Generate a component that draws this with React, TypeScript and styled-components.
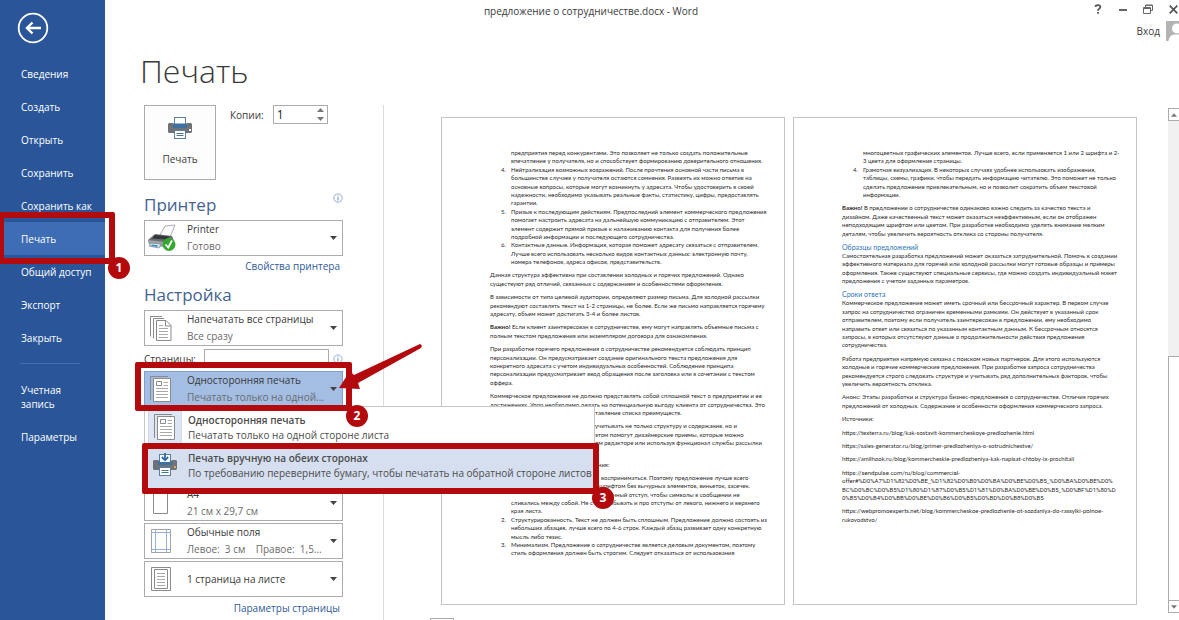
import React from 'react';
import styled, { createGlobalStyle, css } from 'styled-components';

const UI_FONT = '"Open Sans", "Noto Sans", sans-serif';
const RED = '#b30a0e';
const BLUE = '#2a5699';

const GlobalStyle = createGlobalStyle`
  *, *::before, *::after { box-sizing: border-box; }
  html, body { margin: 0; padding: 0; background: #fff; }
  body { font-family: ${UI_FONT}; font-size: 10px; color: #3a3a3a; }
  button, input { font: inherit; color: inherit; border-radius: 0; }
`;

/* ---------- shell ---------- */

const Shell = styled.div`
  display: grid;
  grid-template-columns: 105px minmax(0, 1fr);
  grid-template-rows: 44px minmax(0, 1fr);
  height: 100vh;
  overflow: hidden;
`;

const TitleBar = styled.header`
  grid-column: 1 / -1;
  grid-row: 1;
  display: grid;
  grid-template-columns: 1fr auto 1fr;
  align-items: start;
`;

const DocTitle = styled.div`
  grid-column: 2;
  padding: 3px 0 0 3px;
  line-height: 16px;
`;

const TitleRight = styled.div`
  display: flex;
  flex-direction: column;
  align-items: flex-end;
`;

const WindowButtons = styled.div`
  display: flex;
  padding-top: 2px;
`;

const WindowButton = styled.button`
  display: grid;
  place-items: center;
  width: 25px;
  height: 14px;
  padding: 0;
  border: 0;
  background: none;
  color: #666;
  &:last-child { width: 12px; margin-left: 7px; }
`;

const SignIn = styled.button`
  display: flex;
  align-items: center;
  gap: 6px;
  margin-top: 5px;
  padding: 0;
  border: 0;
  background: none;
  line-height: 16px;
`;

/* ---------- sidebar ---------- */

const Sidebar = styled.nav`
  grid-column: 1;
  grid-row: 1 / -1;
  z-index: 1;
  display: flex;
  flex-direction: column;
  background: ${BLUE};
  color: #fff;
`;

const BackButton = styled.button`
  width: 32px;
  height: 32px;
  margin: 12px 0 13px 17px;
  padding: 0;
  border: 0;
  background: none;
`;

const NavItem = styled.div<{ $active?: boolean }>`
  position: relative;
  display: flex;
  align-items: center;
  min-height: 33px;
  background: ${(p) => (p.$active ? '#3e6db5' : 'transparent')};
`;

const NavLink = styled.a`
  padding-left: 21px;
  color: #fff;
  line-height: 14px;
  text-decoration: none;
  white-space: nowrap;
`;

const NavSeparator = styled.hr`
  width: 60px;
  height: 1px;
  margin: 9px 0 16px 20px;
  border: 0;
  background: #4470ae;
`;

const AccountItem = styled(NavItem)`
  margin-bottom: 7px;
`;

/* ---------- annotations ---------- */

const Frame = styled.div<{ $inset: string }>`
  position: absolute;
  inset: ${(p) => p.$inset};
  z-index: 3;
  border: 6px solid ${RED};
  border-radius: 2px;
  pointer-events: none;
`;

const Badge = styled.span<{ $right: number; $bottom: number }>`
  position: absolute;
  right: ${(p) => p.$right}px;
  bottom: ${(p) => p.$bottom}px;
  display: grid;
  place-items: center;
  width: 22px;
  height: 22px;
  border-radius: 50%;
  background: ${RED};
  color: #fff;
  font-size: 12px;
  font-weight: 700;
  line-height: 16px;
`;

const ArrowSvg = styled.svg`
  position: absolute;
  left: 194px;
  top: -30px;
  z-index: 4;
  pointer-events: none;
`;

/* ---------- main ---------- */

const Main = styled.main`
  grid-column: 2;
  grid-row: 2;
  display: flex;
  flex-direction: column;
  min-height: 0;
`;

const PageTitle = styled.h1`
  margin: 0;
  padding: 7px 0 14px 35px;
  font-size: 32px;
  line-height: 40px;
  font-weight: 300;
`;

const Body = styled.div`
  display: flex;
  flex: 1;
  min-height: 0;
`;

const Settings = styled.section`
  flex: none;
  width: 279px;
  padding: 0 40px 0 39px;
  border-right: 1px solid #dcdcdc;
`;

const PrintRow = styled.div`
  display: flex;
  align-items: flex-start;
`;

const PrintButton = styled.button`
  display: flex;
  flex-direction: column;
  align-items: center;
  gap: 11px;
  width: 72px;
  height: 75px;
  padding: 10px 0 0;
  border: 1px solid #ababab;
  background: #fdfdfd;
  line-height: 16px;
`;

const CopiesLabel = styled.label`
  margin: 2px 9px 0 14px;
  line-height: 16px;
`;

const Spinner = styled.div`
  display: flex;
  align-items: center;
  width: 55px;
  height: 19px;
  padding-right: 3px;
  border: 1px solid #ababab;
`;

const SpinnerInput = styled.input`
  flex: 1;
  min-width: 0;
  padding: 0 0 0 3px;
  border: 0;
  outline: 0;
  background: none;
  color: #222;
  font-size: 12px;
  line-height: 16px;
  appearance: textfield;
  &::-webkit-inner-spin-button { appearance: none; margin: 0; }
`;

const SectionHead = styled.div<{ $top: number }>`
  display: flex;
  justify-content: space-between;
  height: 24px;
  margin: ${(p) => p.$top}px 0 3px;
`;

const SectionTitle = styled.h2`
  margin: 0;
  color: #44628f;
  font-size: 17px;
  line-height: 24px;
  font-weight: 400;
`;

const Stack = styled.div`
  display: flex;
  flex-direction: column;
  gap: 2px;
`;

const DropWrap = styled.div<{ $gapBelow?: number }>`
  position: relative;
  margin-bottom: ${(p) => p.$gapBelow ?? 0}px;
`;

const DropButton = styled.button<{ $open?: boolean }>`
  display: flex;
  align-items: center;
  width: 100%;
  height: 36px;
  padding: 0 5px 0 0;
  border: 1px solid ${(p) => (p.$open ? '#7f9fd2' : '#ababab')};
  background: ${(p) => (p.$open ? '#a3bde3' : '#fff')};
  text-align: left;
  > svg { flex: none; }
`;

const DropIcon = styled.span`
  display: grid;
  place-items: center;
  flex: none;
  width: 32px;
  margin-right: 10px;
`;

const DropText = styled.span`
  display: flex;
  flex-direction: column;
  flex: 1;
  min-width: 0;
  line-height: 17px;
  white-space: pre;
`;

const Muted = styled.span`
  color: #6b6b6b;
`;

const SettingsLink = styled.a<{ $top: number }>`
  display: block;
  margin: ${(p) => p.$top}px 3px 0 0;
  color: #2f5a96;
  line-height: 16px;
  text-align: right;
  text-decoration: none;
`;

const PagesRow = styled.div`
  display: flex;
  align-items: center;
  height: 21px;
`;

const PagesLabel = styled.label`
  width: 61px;
  line-height: 16px;
`;

const PagesInput = styled.input`
  width: 125px;
  height: 19px;
  margin-right: 4px;
  padding: 0 3px;
  border: 1px solid #ababab;
`;

const Menu = styled.div`
  position: absolute;
  left: 0;
  top: 35px;
  z-index: 2;
  width: 451px;
  padding: 2px 0 0 3px;
  border: 1px solid #c6c6c6;
  background: #fff;
`;

const MenuItem = styled.button<{ $hover?: boolean }>`
  display: flex;
  gap: 6px;
  width: 100%;
  height: ${(p) => (p.$hover ? 42 : 38)}px;
  padding: 0;
  border: 0;
  background: ${(p) => (p.$hover ? '#d5dff0' : '#fff')};
  text-align: left;
`;

const MenuIcon = styled.span<{ $on?: boolean }>`
  display: grid;
  place-items: center;
  flex: none;
  width: 34px;
  height: 36px;
  ${(p) => p.$on && css`background: #dfe6f3; border: 1px solid #d0dbee;`}
`;

const MenuText = styled.span`
  display: flex;
  flex-direction: column;
  padding-top: 4px;
  color: #4c4c4c;
  line-height: 15px;
  white-space: nowrap;
`;

const MenuTitle = styled.span`
  font-weight: 600;
`;

/* ---------- preview ---------- */

const Preview = styled.section`
  display: flex;
  flex-direction: column;
  flex: 1;
  min-width: 0;
  padding-top: 12px;
`;

const Sheets = styled.div`
  display: flex;
  flex: none;
  gap: 8px;
  padding: 0 31px 0 57px;
`;

const Sheet = styled.article`
  flex: 1;
  min-width: 0;
  height: 488px;
  padding: 31px 10px 0 48px;
  border: 1px solid #c4c4c4;
  overflow: hidden;
  color: #2b2b2b;
  font-family: Lato, Carlito, sans-serif;
  font-size: 6px;
  line-height: 1.4;
  white-space: nowrap;
`;

const Para = styled.p<{ $encoded?: boolean }>`
  margin: 0 0 5px;
  font-family: ${(p) => (p.$encoded ? 'Roboto, sans-serif' : 'inherit')};
`;

const List = styled.ol`
  margin: 0 0 5px;
  padding: 0 0 0 11px;
  list-style: none;
`;

const ListItem = styled.li`
  display: flex;
`;

const ItemNumber = styled.span`
  flex: none;
  width: 10px;
`;

const Line = styled.span<{ $indent?: number }>`
  display: block;
  min-height: 8px;
  padding-left: ${(p) => p.$indent ?? 0}px;
`;

const DocHeading = styled.h3`
  margin: 0;
  color: #2e74b5;
  font-size: 7px;
  line-height: 9px;
  font-weight: 400;
`;

const PageNav = styled.div`
  padding: 13px 0 0 46px;
`;

const PageNumber = styled.input`
  width: 24px;
  height: 19px;
  border: 1px solid #ababab;
`;

const ScrollTrack = styled.div`
  display: flex;
  flex-direction: column;
  flex: none;
  width: 11px;
  margin: 3px 0 7px;
  background: #f1f1f1;
`;

const ScrollButton = styled.button`
  display: grid;
  place-items: center;
  flex: none;
  height: 13px;
  padding: 0;
  border: 1px solid #ababab;
  border-right: 0;
  background: #fff;
`;

const ScrollThumb = styled.div`
  flex: 1;
  margin-top: 235px;
  border: 1px solid #ababab;
  border-right: 0;
  border-bottom: 0;
  background: #fff;
`;

/* ---------- icons ---------- */

const Caret = ({ up, size = 7, color = '#444' }: { up?: boolean; size?: number; color?: string }) => (
  <svg width={size} height="4" viewBox="0 0 7 4" aria-hidden="true">
    <path d={up ? 'M0 4 3.5 0 7 4Z' : 'M0 0H7L3.5 4Z'} fill={color} />
  </svg>
);

const InfoIcon = () => (
  <svg width="10" height="10" viewBox="0 0 10 10" aria-hidden="true">
    <circle cx="5" cy="5" r="4.2" fill="#fff" stroke="#7d9cc4" strokeWidth=".8" />
    <path d="M5 4.3V7.5M5 2.4V3.4" stroke="#5f86b8" strokeWidth="1" />
  </svg>
);

const PrinterIcon = ({ arrow }: { arrow?: boolean }) => (
  <svg width="26" height="24" viewBox="0 0 26 24" aria-hidden="true">
    <path d="M2 7H6V10H20V7H24L25 8V16L24 17H2L1 16V8Z" fill="#6f7276" />
    <rect x="7.5" y="1.5" width="11" height="9" fill="#fff" stroke="#5a7fa3" />
    <path d="M6 7.500H20V12H6Z" fill="#3f719f" />
    {arrow && (
      <>
        <path d="M8 2H18V9H8Z" fill="#fff" />
        <path d="M13 0V7M9.800 4 13 7.300 16.200 4" fill="none" stroke="#2f6ba8" strokeWidth="1.800" />
      </>
    )}
    <rect x="22" y="13" width="2" height="2" fill={arrow ? '#e4a06c' : '#fff'} />
    <rect x="7.5" y="14.5" width="11" height="8" fill="#fff" stroke="#5a7fa3" />
    <path d="M9.500 17.500H16.500M9.500 19.500H16.500" stroke="#4a7199" />
  </svg>
);

const DevicePrinterIcon = () => (
  <svg width="29" height="28" viewBox="0 0 29 28" aria-hidden="true">
    <path d="M13 11 18 2 28 1 23 13Z" fill="#fbfbfb" stroke="#9a9a9a" strokeWidth=".8" />
    <path d="M1 16 8 10 25 12 27 17 18 22 2 20Z" fill="#6a6d70" />
    <path d="M8 11 23 12.5 19 15.5 5 14.5Z" fill="#33373a" />
    <path d="M1 16 18 18V23L3 22Z" fill="#9ea3a8" />
    <path d="M4 19 14 20 12 24 2 22Z" fill="#dfe7ee" stroke="#6a7f92" strokeWidth=".7" />
    <path d="M5 20.5 11 21.3 10 23 4 22Z" fill="#3f8fc4" />
    <circle cx="22" cy="20.5" r="6.5" fill="#35a832" />
    <path d="M18.5 20.5 21.3 23.5 25 16.5" fill="none" stroke="#fff" strokeWidth="1.8" />
  </svg>
);

const PagesIcon = () => (
  <svg width="22" height="26" viewBox="0 0 22 26" fill="none" stroke="#8a8a8a" aria-hidden="true">
    <path d="M.5 21.5V1.500H12M3.500 23.500V3.500H14" />
    <path d="M6.500 5.500H16L21 10.500V25.500H6.500Z" fill="#fff" />
    <path d="M15.500 5.500V11H21" />
    <path d="M9 10.500H13M9 13.500H18M9 16.500H18M9 19.500H18M9 22.500H18" stroke="#a8a8a8" />
  </svg>
);

const OneSidedIcon = () => (
  <svg width="22" height="28" viewBox="0 0 22 28" fill="none" stroke="#8a8a8a" aria-hidden="true">
    <path d="M.5 25V1.500H18" />
    <path d="M3.500 3.500H20.500V26.500H3.500Z" fill="#fff" />
    <path d="M6.500 6.500H11.500V10.500H6.500Z" />
    <path d="M13.500 7.500H18M13.500 10.500H18M6 13.500H18M6 16.500H18M6 19.500H18M6 22.500H18" stroke="#a8a8a8" />
  </svg>
);

const PaperIcon = () => (
  <svg width="22" height="28" viewBox="0 0 22 28" fill="none" stroke="#8a8a8a" aria-hidden="true">
    <path d="M3.500 2.500H17.500V24.500H3.500Z" fill="#fff" />
  </svg>
);

const MarginsIcon = () => (
  <svg width="22" height="26" viewBox="0 0 22 26" fill="none" aria-hidden="true">
    <path d="M1.500 1.500H20.500V24.500H1.500Z" fill="#fff" stroke="#a2a2a2" />
    <path d="M5.500 1V25M16.500 1V25M1 4.500H21M1 21.500H21" stroke="#8fb2d6" />
  </svg>
);

const SheetIcon = () => (
  <svg width="22" height="26" viewBox="0 0 22 26" fill="none" stroke="#8a8a8a" aria-hidden="true">
    <path d="M1.500 1.500H20.500V24.500H1.500Z" />
    <path d="M4.500 3.500H17.500V22.500H4.500Z" fill="#fff" />
    <path d="M7 7.500H15M7 10.500H15M7 13.500H15M7 16.500H15M7 19.500H15" stroke="#a8a8a8" />
  </svg>
);

/* ---------- document text ---------- */

type DocLine = string | { indent: number; text: string };
type Block =
  | { kind: 'p'; lines: DocLine[]; lead?: string; encoded?: boolean }
  | { kind: 'h'; text: string }
  | { kind: 'ol'; items: { n: string; lines: DocLine[] }[] };

const firstSheet: Block[] = [
  {
    kind: 'ol',
    items: [
      { n: '', lines: ['предприятия перед конкурентами. Это позволяет не только создать положительные', 'впечатление у получателя, но и способствует формированию доверительного отношения.'] },
      { n: '4.', lines: ['Нейтрализация возможных возражений. После прочтения основной части письма в', 'большинстве случаев у получателя остаются сомнения. Развеять их можно ответив на', 'основные вопросы, которые могут возникнуть у адресата. Чтобы удостоверить в своей', 'надежности, необходимо указывать реальные факты, статистику, цифры, предоставлять', 'гарантии.'] },
      { n: '5.', lines: ['Призыв к последующим действиям. Предпоследний элемент коммерческого предложения', 'помогает настроить адресата на дальнейшую коммуникацию с отправителем. Этот', 'элемент содержит прямой призыв к налаживанию контакта для получения более', 'подробной информации и последующего сотрудничества.'] },
      { n: '6.', lines: ['Контактные данные. Информация, которая поможет адресату связаться с отправителем.', 'Лучше всего использовать несколько видов контактных данных: электронную почту,', 'номера телефонов, адреса офисов, представительств.'] },
    ],
  },
  { kind: 'p', lines: ['Данная структура эффективна при составлении холодных и горячих предложений. Однако', 'существуют ряд отличий, связанных с содержанием и особенностями оформления.'] },
  { kind: 'p', lines: ['В зависимости от типа целевой аудитории, определяют размер письма. Для холодной рассылки', 'рекомендуют составлять текст на 1-2 страницы, не более. Если же письмо направляется горячему', 'адресату, объем может достигать 3-4 и более листов.'] },
  { kind: 'p', lead: 'Важно!', lines: [' Если клиент заинтересован в сотрудничестве, ему могут направлять объемные письма с', 'полным текстом предложения или экземпляром договора для ознакомления.'] },
  { kind: 'p', lines: ['При разработке горячего предложения о сотрудничестве рекомендуется соблюдать принцип', 'персонализации. Он предусматривает создание оригинального текста предложения для', 'конкретного адресата с учетом индивидуальных особенностей. Соблюдение принципа', 'персонализации предусматривает ввод обращения после заголовка или в сочетании с текстом', 'оффера.'] },
  { kind: 'p', lines: ['Коммерческое предложение не должно представлять собой сплошной текст о предприятии и ее', 'достижениях. Упор необходимо делать на потенциальную выгоду клиента от сотрудничества. Это', { indent: 105, text: 'тавление списка преимуществ.' }] },
  { kind: 'p', lines: [{ indent: 105, text: 'учитывать не только структуру и содержание, но и' }, { indent: 105, text: 'этом помогут дизайнерские приемы, которые можно' }, { indent: 105, text: 'ом редакторе или используя функционал службы рассылки' }, ''] },
  { kind: 'p', lines: [{ indent: 108, text: 'ния:' }] },
  {
    kind: 'ol',
    items: [
      { n: '', lines: [{ indent: 90, text: 'восприниматься. Поэтому предложение лучше всего' }, { indent: 88, text: 'шрифтом без вычурных элементов, виньеток, засечек.' }, { indent: 102, text: 'чный отступ, чтобы символы в сообщении не' }, 'сливались между собой. Не стоит забывать и про отступы от левого, нижнего и верхнего', 'края листа.'] },
      { n: '2.', lines: ['Структурированность. Текст не должен быть сплошным. Предложение должно состоять из', 'небольших абзацев, лучше всего по 4-6 строк. Каждый абзац развивает одну конкретную', 'мысль либо тезис.'] },
      { n: '3.', lines: ['Минимализм. Предложение о сотрудничестве является деловым документом, поэтому', 'стиль оформления должен быть строгим. Следует отказаться от использования'] },
    ],
  },
];

const secondSheet: Block[] = [
  {
    kind: 'ol',
    items: [
      { n: '', lines: ['многоцветных графических элементов. Лучше всего, если применяется 1 или 2 шрифта и 2-', '3 цвета для оформления страницы.'] },
      { n: '4.', lines: ['Грамотная визуализация. В некоторых случаях удобнее использовать изображения,', 'таблицы, схемы, графики, чтобы передать информацию читателю. Это поможет не только', 'сделать предложение привлекательным, но и позволит сократить объем текстовой', 'информации.'] },
    ],
  },
  { kind: 'p', lead: 'Важно!', lines: [' В предложении о сотрудничестве одинаково важно следить за качество текста и', 'дизайном. Даже качественный текст может оказаться неэффективным, если он отображен', 'неподходящим шрифтом или цветом. При разработке необходимо уделять внимание мелким', 'деталям, чтобы увеличить вероятность отклика со стороны получателя.'] },
  { kind: 'h', text: 'Образцы предложений' },
  { kind: 'p', lines: ['Самостоятельная разработка предложений может оказаться затруднительной. Помочь в создании', 'эффективного материала для горячей или холодной рассылки могут готовые образцы и примеры', 'оформления. Также существуют специальные сервисы, где можно создать индивидуальный макет', 'предложения с учетом заданных параметров.'] },
  { kind: 'h', text: 'Сроки ответа' },
  { kind: 'p', lines: ['Коммерческое предложение может иметь срочный или бессрочный характер. В первом случае', 'запрос на сотрудничество ограничен временными рамками. Он действует в указанный срок', 'отправителем, поэтому если получатель заинтересован в предложении, ему необходимо', 'направить ответ или связаться по указанным контактным данным. К бессрочным относятся', 'запросы, в которых отсутствуют данные о продолжительности действия предложения', 'сотрудничества.'] },
  { kind: 'p', lines: ['Работа предприятия напрямую связана с поиском новых партнеров. Для этого используются', 'холодные и горячие коммерческие предложения. При разработке запроса сотрудничества', 'рекомендуется строго следовать структуре и учитывать ряд дополнительных факторов, чтобы', 'увеличить вероятность отклика.'] },
  { kind: 'p', lines: ['Анонс: Этапы разработки и структура бизнес-предложения о сотрудничестве. Отличия горячих', 'предложений от холодных. Содержание и особенности оформления коммерческого запроса.'] },
  { kind: 'p', lines: ['Источники:'] },
  { kind: 'p', lines: ['https://texterra.ru/blog/kak-sostavit-kommercheskoye-predlozhenie.html'] },
  { kind: 'p', lines: ['https://sales-generator.ru/blog/primer-predlozheniya-o-sotrudnichestve/'] },
  { kind: 'p', lines: ['https://amilhook.ru/blog/kommercheskie-predlozheniya-kak-napisat-chtoby-ix-prochitali'] },
  { kind: 'p', encoded: true, lines: ['https://sendpulse.com/ru/blog/commercial-', 'offer#%D0%A7%D1%82%D0%BE_%D1%82%D0%B0%D0%BA%D0%BE%D0%B5_%D0%BA%D0%BE%D0%', 'BC%D0%BC%D0%B5%D1%80%D1%87%D0%B5%D1%81%D0%BA%D0%BE%D0%B5_%D0%BF%D1%80%D', '0%B5%D0%B4%D0%BB%D0%BE%D0%B6%D0%B5%D0%BD%D0%B8%D0%B5'] },
  { kind: 'p', lines: ['https://webpromoexperts.net/blog/kommercheskoe-predlozhenie-ot-sozdaniya-do-rassylki-polnoe-', 'rukovodstvo/'] },
];

const Lines = ({ lines, lead }: { lines: DocLine[]; lead?: string }) => (
  <>
    {lines.map((line, i) =>
      typeof line === 'string' ? (
        <Line key={i}>
          {i === 0 && lead ? <b>{lead}</b> : null}
          {line}
        </Line>
      ) : (
        <Line key={i} $indent={line.indent}>{line.text}</Line>
      ),
    )}
  </>
);

const DocSheet = ({ blocks }: { blocks: Block[] }) => (
  <Sheet>
    {blocks.map((block, i) => {
      if (block.kind === 'h') return <DocHeading key={i}>{block.text}</DocHeading>;
      if (block.kind === 'p') {
        return <Para key={i} $encoded={block.encoded}><Lines lines={block.lines} lead={block.lead} /></Para>;
      }
      return (
        <List key={i}>
          {block.items.map((item, j) => (
            <ListItem key={j}>
              <ItemNumber>{item.n}</ItemNumber>
              <div><Lines lines={item.lines} /></div>
            </ListItem>
          ))}
        </List>
      );
    })}
  </Sheet>
);

/* ---------- composed controls ---------- */

const navItems = ['Сведения', 'Создать', 'Открыть', 'Сохранить', 'Сохранить как', 'Печать', 'Общий доступ', 'Экспорт', 'Закрыть'];

interface DropProps {
  icon: React.ReactNode;
  title: string;
  detail?: string;
  open?: boolean;
  gapBelow?: number;
  children?: React.ReactNode;
}

const Drop = ({ icon, title, detail, open, gapBelow, children }: DropProps) => (
  <DropWrap $gapBelow={gapBelow}>
    <DropButton type="button" aria-haspopup="menu" aria-expanded={!!open} $open={open}>
      <DropIcon>{icon}</DropIcon>
      <DropText>
        <span>{title}</span>
        {detail && <Muted>{detail}</Muted>}
      </DropText>
      <Caret />
    </DropButton>
    {children}
  </DropWrap>
);

export default function App() {
  return (
    <>
      <GlobalStyle />
      <Shell>
        <TitleBar>
          <DocTitle>предложение о сотрудничестве.docx - Word</DocTitle>
          <TitleRight>
            <WindowButtons>
              <WindowButton type="button" aria-label="Справка">
                <svg width="8" height="10" viewBox="0 0 8 10" fill="none" stroke="#555" strokeWidth="1.8">
                  <path d="M1.500 2.800C1.700 .6 6.300 .6 6.300 3 6.300 4.800 4 4.500 4 6.800M4 8V9.800" />
                </svg>
              </WindowButton>
              <WindowButton type="button" aria-label="Свернуть">
                <svg width="8" height="10" viewBox="0 0 8 10"><path d="M0 5H8V7H0Z" fill="#666" /></svg>
              </WindowButton>
              <WindowButton type="button" aria-label="Восстановить">
                <svg width="10" height="10" viewBox="0 0 10 10" fill="none" stroke="#666">
                  <path d="M2.500 3V1H9.500V6.500H7.500M2.500 1.500H9.500M.5 3.500H7.500V9.500H.5ZM.5 4.500H7.500" />
                </svg>
              </WindowButton>
              <WindowButton type="button" aria-label="Закрыть окно">
                <svg width="9" height="9" viewBox="0 0 9 9" stroke="#555" strokeWidth="1.700">
                  <path d="M.7 .7 8.300 8.300M8.300 .7 .7 8.300" />
                </svg>
              </WindowButton>
            </WindowButtons>
            <SignIn type="button">
              Вход
              <svg width="13" height="20" viewBox="0 0 13 20" aria-hidden="true">
                <path d="M0 0H13V20H0Z" fill="#b4b4b4" />
                <circle cx="11" cy="7.500" r="5" fill="#fff" />
                <path d="M2.500 20C3 15.500 6 13.500 9 13.500H13V20Z" fill="#fff" />
              </svg>
            </SignIn>
          </TitleRight>
        </TitleBar>

        <Sidebar>
          <BackButton type="button" aria-label="Назад">
            <svg width="32" height="32" viewBox="0 0 32 32" fill="none" stroke="#fff">
              <circle cx="16" cy="16" r="14.300" strokeWidth="1.800" />
              <path d="M9.500 16H24M15.500 10.500 10 16 15.500 21.500" strokeWidth="2.400" />
            </svg>
          </BackButton>
          {navItems.map((label) => (
            <NavItem key={label} $active={label === 'Печать'}>
              <NavLink href="#">{label}</NavLink>
              {label === 'Печать' && (
                <Frame $inset="-10px -10px -9px -2px">
                  <Badge $right={-21} $bottom={-21}>1</Badge>
                </Frame>
              )}
            </NavItem>
          ))}
          <NavSeparator />
          <AccountItem><NavLink href="#">Учетная<br />запись</NavLink></AccountItem>
          <NavItem><NavLink href="#">Параметры</NavLink></NavItem>
        </Sidebar>

        <Main>
          <PageTitle>Печать</PageTitle>
          <Body>
            <Settings>
              <PrintRow>
                <PrintButton type="button">
                  <PrinterIcon />
                  Печать
                </PrintButton>
                <CopiesLabel htmlFor="copies">Копии:</CopiesLabel>
                <Spinner>
                  <SpinnerInput id="copies" type="number" defaultValue={1} />
                  <svg width="7" height="13" viewBox="0 0 7 13" fill="#777" aria-hidden="true">
                    <path d="M0 4 3.500 0 7 4ZM0 9H7L3.500 13Z" />
                  </svg>
                </Spinner>
              </PrintRow>

              <SectionHead $top={13}>
                <SectionTitle>Принтер</SectionTitle>
                <InfoIcon />
              </SectionHead>
              <Drop icon={<DevicePrinterIcon />} title="Printer" detail="Готово" />
              <SettingsLink href="#" $top={2}>Свойства принтера</SettingsLink>

              <SectionHead $top={9}>
                <SectionTitle>Настройка</SectionTitle>
              </SectionHead>
              <Stack>
                <Drop icon={<PagesIcon />} title="Напечатать все страницы" detail="Все сразу" />
                <PagesRow>
                  <PagesLabel htmlFor="pages">Страницы:</PagesLabel>
                  <PagesInput id="pages" type="text" />
                  <InfoIcon />
                </PagesRow>
                <Drop icon={<OneSidedIcon />} title="Односторонняя печать" detail="Печатать только на одной..." open gapBelow={76}>
                  <Menu role="menu">
                    <MenuItem type="button" role="menuitem">
                      <MenuIcon $on><OneSidedIcon /></MenuIcon>
                      <MenuText>
                        <MenuTitle>Односторонняя печать</MenuTitle>
                        <span>Печатать только на одной стороне листа</span>
                      </MenuText>
                    </MenuItem>
                    <MenuItem type="button" role="menuitem" $hover>
                      <MenuIcon><PrinterIcon arrow /></MenuIcon>
                      <MenuText>
                        <MenuTitle>Печать вручную на обеих сторонах</MenuTitle>
                        <span>По требованию переверните бумагу, чтобы печатать на обратной стороне листов</span>
                      </MenuText>
                    </MenuItem>
                    <Frame $inset="36px -5px -5px -3px">
                      <Badge $right={-21} $bottom={-21}>3</Badge>
                    </Frame>
                  </Menu>
                  <Frame $inset="-9px -9px -4px -9px">
                    <Badge $right={-22} $bottom={-22}>2</Badge>
                  </Frame>
                  <ArrowSvg width="86" height="52" viewBox="0 0 86 52" aria-hidden="true">
                    <path d="M1 47 12 30 16 34 82 3Q85 4 83 7L20 42 22 48Z" fill={RED} />
                  </ArrowSvg>
                </Drop>
                <Drop icon={<PaperIcon />} title="A4" detail="21 см x 29,7 см" />
                <Drop icon={<MarginsIcon />} title="Обычные поля" detail="Левое:  3 см    Правое:  1,5..." />
                <Drop icon={<SheetIcon />} title="1 страница на листе" />
              </Stack>
              <SettingsLink href="#" $top={3}>Параметры страницы</SettingsLink>
            </Settings>

            <Preview>
              <Sheets>
                <DocSheet blocks={firstSheet} />
                <DocSheet blocks={secondSheet} />
              </Sheets>
              <PageNav>
                <PageNumber type="text" aria-label="Номер страницы" />
              </PageNav>
            </Preview>

            <ScrollTrack>
              <ScrollButton type="button" aria-label="Вверх"><Caret up size={6} color="#777" /></ScrollButton>
              <ScrollThumb />
              <ScrollButton type="button" aria-label="Вниз"><Caret size={6} color="#777" /></ScrollButton>
            </ScrollTrack>
          </Body>
        </Main>
      </Shell>
    </>
  );
}
